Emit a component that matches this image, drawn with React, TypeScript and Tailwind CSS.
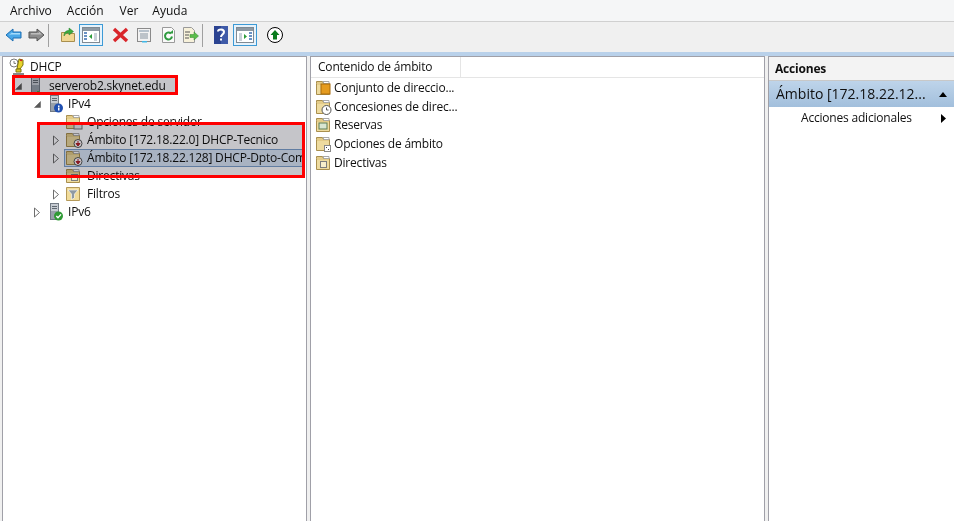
type IconProps = { className?: string };

const FONT = "font-['Open_Sans','Liberation_Sans',sans-serif]";

const MENU_ITEMS = [
  { label: 'Archivo', className: 'ml-[10px]' },
  { label: 'Acción', className: 'ml-[15px]' },
  { label: 'Ver', className: 'ml-[16px]' },
  { label: 'Ayuda', className: 'ml-[14px]' },
];

const Folder = ({ children }: { children?: React.ReactNode }) => (
  <svg width="18" height="16" viewBox="0 0 18 16" className="shrink-0">
    <path d="M1.5 3.5V1.5h6l1 2h6v11h-13z" fill="#e3cb88" stroke="#a98f4e" />
    <rect x="2" y="5" width="12" height="9" fill="#eedb9f" />
    <path d="M8 1.500h6v2H9z" fill="#fff" stroke="#a9a9a9" />
    {children}
  </svg>
);

const BadgeDown = () => (
  <g>
    <circle cx="13" cy="11.500" r="4" fill="#fff" stroke="#555" />
    <path d="M13 9v3M11 11.500l2 2.500 2-2.500z" stroke="#b3202a" fill="#b3202a" />
  </g>
);

const Server = ({ badge }: { badge?: 'blue' | 'green' | 'tiny' }) => (
  <svg width="18" height="18" viewBox="0 0 18 18" className="shrink-0">
    <rect x="4.500" y="0.500" width="8" height="16" fill="#c6cbd2" stroke="#727a84" />
    <rect x="6" y="3" width="5" height="1" fill="#5f6770" />
    <rect x="6" y="5" width="5" height="1" fill="#5f6770" />
    <rect x="5" y="8" width="7" height="8" fill="#98a0aa" />
    {badge === 'blue' && (
      <g>
        <circle cx="12.500" cy="13" r="4.500" fill="#1f4fb0" />
        <rect x="12" y="10.500" width="1.500" height="1.500" fill="#fff" />
        <rect x="12" y="12.500" width="1.500" height="3" fill="#fff" />
      </g>
    )}
    {badge === 'green' && (
      <g>
        <circle cx="12.500" cy="13" r="4.500" fill="#2f9a35" />
        <path d="M10.300 13l1.700 1.800 3-3.400" stroke="#fff" strokeWidth="1.400" fill="none" />
      </g>
    )}
    {badge === 'tiny' && <rect x="10" y="14" width="2" height="2" fill="#46b03c" />}
  </svg>
);

const OpenArrow = () => (
  <svg width="7" height="7" viewBox="0 0 7 7" className="shrink-0">
    <path d="M6.500.5v6h-6z" fill="#595959" stroke="#595959" strokeWidth="0.500" />
  </svg>
);

const ClosedArrow = () => (
  <svg width="8" height="11" viewBox="0 0 8 11" className="shrink-0">
    <path d="M1.500 1l5 4.500-5 4.500z" fill="#fff" stroke="#6e6e6e" />
  </svg>
);

const TreeRow = ({
  indent,
  arrow,
  icon,
  label,
  selected,
  className = '',
}: {
  indent: string;
  arrow?: React.ReactNode;
  icon: React.ReactNode;
  label: string;
  selected?: boolean;
  className?: string;
}) => (
  <div className={`flex h-[18px] items-center whitespace-nowrap ${className}`}>
    <div className={`flex h-full shrink-0 items-center justify-end ${indent}`}>{arrow}</div>
    {selected ? (
      <div className="ml-[4px] mr-[3px] flex h-full min-w-0 flex-1 items-center overflow-hidden border border-[#7da2ce] bg-[#dbe8f6]">
        <div className="flex w-[18px] shrink-0 justify-center">{icon}</div>
        <span className="ml-[4px]">{label}</span>
      </div>
    ) : (
      <>
        <div className="ml-[5px] flex w-[18px] shrink-0 justify-center">{icon}</div>
        <span className="ml-[4px]">{label}</span>
      </>
    )}
  </div>
);

const DhcpIcon = () => (
  <svg width="16" height="18" viewBox="0 0 16 18" className="shrink-0">
    <circle cx="5" cy="5" r="4" fill="#fff" stroke="#7a7a7a" />
    <path d="M5 3v2.400h2" stroke="#7a7a7a" fill="none" />
    <path d="M10 1l4 1v5l-3 4H8l1-5z" fill="#e8d42c" stroke="#7d7410" />
    <path d="M11 2l2 .5" stroke="#c22" strokeWidth="1.400" />
    <path d="M7 11h5v3H7z" fill="#d9c828" stroke="#7d7410" />
    <path d="M4 16h11" stroke="#555" strokeWidth="1.400" />
  </svg>
);

const FilterIcon = () => (
  <svg width="18" height="16" viewBox="0 0 18 16" className="shrink-0">
    <path d="M1.500 1.500h13v13h-13z" fill="#f1dc9b" stroke="#b59a5a" />
    <path d="M3 4h10L9.500 8v4l-3 1.500V8z" fill="#8f99a3" stroke="#fff" strokeWidth="0.600" />
  </svg>
);

const BackArrow = () => (
  <svg width="17" height="14" viewBox="0 0 17 14">
    <path d="M1 7l7-6v3h8v6H8v3z" fill="#4aa8e8" stroke="#1c6fb4" />
    <path d="M4 7l3-2.500V5h8v1.500H6z" fill="#a6dcfb" />
  </svg>
);

const ForwardArrow = () => (
  <svg width="17" height="14" viewBox="0 0 17 14">
    <path d="M16 7L9 1v3H1v6h8v3z" fill="#8c8c8c" stroke="#555" />
    <path d="M3 5h8V3.500L14 6.500H3z" fill="#bdbdbd" />
  </svg>
);

const FolderUp = () => (
  <svg width="16" height="16" viewBox="0 0 16 16">
    <path d="M1.500 5.500h4l1 1h8v8h-13z" fill="#f1d792" stroke="#a98f4e" />
    <path d="M4 9c0-4 2-5.500 5-5.500V1l4.500 3.500L9 8V5.800C6.500 5.800 5 7 4 9z" fill="#3cab3c" stroke="#1f7d28" strokeWidth="0.500" />
  </svg>
);

const PaneToggle = ({ flip }: { flip?: boolean }) => (
  <div className="flex h-[22px] w-[24px] items-center justify-center border border-[#3c9ad6] bg-[#e6f2fb]">
    <svg width="18" height="16" viewBox="0 0 18 16">
      <rect x="0.500" y="0.500" width="17" height="15" fill="#fff" stroke="#7f8a94" />
      <rect x="1" y="1" width="16" height="3" fill="#8e99a3" />
      {flip ? (
        <>
          <path d="M8 7l3 2.500L8 12z" fill="#2d9c3a" />
          <rect x="3" y="6" width="3" height="8" fill="#c9d1d8" />
          <path d="M13 6h3M13 9h3M13 12h3" stroke="#3a6fb0" strokeWidth="1.400" />
        </>
      ) : (
        <>
          <path d="M10 7L7 9.500l3 2.500z" fill="#2d9c3a" />
          <rect x="12" y="6" width="3" height="8" fill="#c9d1d8" />
          <path d="M2 6h3M2 9h3M2 12h3" stroke="#3a6fb0" strokeWidth="1.400" />
        </>
      )}
    </svg>
  </div>
);

const RedX = () => (
  <svg width="17" height="16" viewBox="0 0 17 16">
    <path d="M2 2l13 12M15 2L2 14" stroke="#d9252a" strokeWidth="3.400" fill="none" />
  </svg>
);

const PropsDoc = () => (
  <svg width="16" height="16" viewBox="0 0 16 16">
    <rect x="1.500" y="1.500" width="13" height="13" fill="#f2f2f2" stroke="#8a8a8a" />
    <rect x="3" y="3" width="10" height="2" fill="#b7c2cc" />
    <path d="M4 7h8M4 9h8M4 11h8" stroke="#8794a0" />
    <rect x="6" y="14" width="5" height="1.500" fill="#40b7e6" />
  </svg>
);

const Refresh = () => (
  <svg width="15" height="16" viewBox="0 0 15 16">
    <path d="M1.500.5h9l3 3v12h-12z" fill="#fafafa" stroke="#9a9a9a" />
    <path d="M11 9.500a3.500 3.500 0 1 1-1-3" stroke="#2f9b3f" strokeWidth="2" fill="none" />
    <path d="M8 6.500h4V3z" fill="#2f9b3f" />
  </svg>
);

const ExportList = () => (
  <svg width="17" height="16" viewBox="0 0 17 16">
    <path d="M1.500.5h8l3 3v12h-11z" fill="#f7f1da" stroke="#9a9a9a" />
    <path d="M3 5h5M3 8h4M3 11h4" stroke="#555" />
    <path d="M8 7.500h4V5l4.500 4-4.500 4v-2.500H8z" fill="#5bbd4a" stroke="#348a2b" strokeWidth="0.500" />
  </svg>
);

const Help = () => (
  <svg width="14" height="18" viewBox="0 0 14 18">
    <rect width="14" height="18" fill="#3e5aa8" />
    <rect width="7" height="18" fill="#2b4391" />
    <path d="M4 5.500C4 3 10 2.500 10 6c0 2.500-3 2.500-3 5" stroke="#fff" strokeWidth="2" fill="none" />
    <rect x="6" y="12.500" width="2" height="2" fill="#fff" />
  </svg>
);

const UpCircle = () => (
  <svg width="16" height="16" viewBox="0 0 16 16">
    <circle cx="8" cy="8" r="7.500" fill="#fff" stroke="#000" />
    <path d="M8 3L3.500 8H6v4.500h4V8h2.500z" fill="#0a7d1e" />
  </svg>
);

const Separator = ({ className }: IconProps) => (
  <div className={`h-[23px] w-px bg-[#a0a0a0] ${className}`} />
);

const RedBox = ({ className }: IconProps) => (
  <div className={`pointer-events-none absolute border-[3px] border-[#fe0000] ${className}`}>
    <div className="h-full w-full bg-[#c5c5c9] mix-blend-multiply" />
  </div>
);

const CONTENT_ITEMS: { label: string; badge: React.ReactNode }[] = [
  {
    label: 'Conjunto de direccio...',
    badge: <rect x="6" y="4" width="9" height="10" fill="#e59b1f" stroke="#a86a0c" />,
  },
  {
    label: 'Concesiones de direc...',
    badge: (
      <g>
        <circle cx="11.500" cy="11" r="4.500" fill="#fff" stroke="#555" />
        <path d="M11.500 8.500V11h2" stroke="#555" fill="none" />
      </g>
    ),
  },
  {
    label: 'Reservas',
    badge: <rect x="4" y="6" width="8" height="6" fill="#d8e6d2" stroke="#5b7d55" />,
  },
  {
    label: 'Opciones de ámbito',
    badge: (
      <g>
        <rect x="9.500" y="9.500" width="6" height="6" fill="#fff" stroke="#888" />
        <rect x="11" y="11" width="1" height="1" fill="#444" />
        <rect x="13" y="13" width="1" height="1" fill="#444" />
      </g>
    ),
  },
  {
    label: 'Directivas',
    badge: <rect x="5.500" y="6.500" width="6" height="6" fill="#f7eecb" stroke="#7d7d7d" />,
  },
];

export default function App() {
  return (
    <div className={`relative flex h-[521px] w-[954px] flex-col overflow-hidden bg-[#f0f0f0] text-[12px] leading-[16px] tracking-[-0.2px] text-[#101010] ${FONT}`}>
      <div className="flex h-[22px] shrink-0 items-center border-b border-[#d0d0d0] bg-[#f5f6f7] tracking-normal">
        {MENU_ITEMS.map((item) => (
          <span key={item.label} className={item.className}>
            {item.label}
          </span>
        ))}
      </div>

      <div className="flex h-[30px] shrink-0 items-center bg-[#f0f0f0] pb-[4px]">
        <div className="ml-[5px]"><BackArrow /></div>
        <div className="ml-[6px]"><ForwardArrow /></div>
        <Separator className="ml-[3px]" />
        <div className="ml-[11px]"><FolderUp /></div>
        <div className="ml-[3px]"><PaneToggle /></div>
        <div className="ml-[9px]"><RedX /></div>
        <div className="ml-[7px]"><PropsDoc /></div>
        <div className="ml-[9px]"><Refresh /></div>
        <div className="ml-[6px]"><ExportList /></div>
        <Separator className="ml-[3px]" />
        <div className="ml-[11px]"><Help /></div>
        <div className="ml-[5px]"><PaneToggle flip /></div>
        <div className="ml-[10px]"><UpCircle /></div>
      </div>

      <div className="flex min-h-0 flex-1 bg-[#b9d1ea] pt-[4px]">
        <div className="flex min-h-0 flex-1 bg-[#f0f0f0]">
          <div className="ml-[2px] w-[305px] shrink-0 border-x border-t border-[#a0a0a8] bg-white pt-px">
            <TreeRow indent="w-0" icon={<DhcpIcon />} label="DHCP" className="h-[19px] pb-[2px]" />
            <TreeRow indent="w-[19px]" arrow={<OpenArrow />} icon={<Server badge="tiny" />} label="serverob2.skynet.edu" />
            <TreeRow indent="w-[38px]" arrow={<OpenArrow />} icon={<Server badge="blue" />} label="IPv4" />
            <TreeRow indent="w-[57px]" icon={<Folder><rect x="9" y="9" width="8" height="6" fill="#e9e9e9" stroke="#777" /></Folder>} label="Opciones de servidor" />
            <TreeRow indent="w-[57px]" arrow={<ClosedArrow />} icon={<Folder><BadgeDown /></Folder>} label="Ámbito [172.18.22.0] DHCP-Tecnico" />
            <TreeRow indent="w-[57px]" arrow={<ClosedArrow />} icon={<Folder><BadgeDown /></Folder>} label="Ámbito [172.18.22.128] DHCP-Dpto-Com" selected />
            <TreeRow indent="w-[57px]" icon={<Folder><rect x="6.500" y="6.500" width="6" height="6" fill="#f7eecb" stroke="#7d7d7d" /></Folder>} label="Directivas" />
            <TreeRow indent="w-[57px]" arrow={<ClosedArrow />} icon={<FilterIcon />} label="Filtros" />
            <TreeRow indent="w-[38px]" arrow={<ClosedArrow />} icon={<Server badge="green" />} label="IPv6" />
          </div>

          <div className="ml-[3px] w-[455px] shrink-0 border-x border-t border-[#a0a0a8] bg-white">
            <div className="flex h-[21px] items-center">
              <div className="flex h-full w-[150px] items-center border-b border-r border-[#e5e5e5] pl-[7px]">Contenido de ámbito</div>
              <div className="h-full flex-1 border-b border-[#e5e5e5]" />
            </div>
            <div className="pt-[0.5px]">
              {CONTENT_ITEMS.map((item) => (
                <div key={item.label} className="flex h-[18.8px] items-center whitespace-nowrap pl-[4px]">
                  <Folder>{item.badge}</Folder>
                  <span className="ml-px">{item.label}</span>
                </div>
              ))}
            </div>
          </div>

          <div className="ml-[3px] flex-1 border-l border-t border-[#a0a0a8] bg-white">
            <div className="flex h-[24px] items-center border-b border-[#c8c8c8] bg-[#f3f3f3] pl-[6px] font-bold">Acciones</div>
            <div className="flex h-[26px] items-center justify-between bg-gradient-to-b from-[#bed4ea] to-[#a2bfdc] pl-[7px] pr-[7px] text-[14px] tracking-normal">
              <span>Ámbito [172.18.22.12...</span>
              <svg width="8" height="5" viewBox="0 0 8 5"><path d="M4 0l4 5H0z" fill="#000" /></svg>
            </div>
            <div className="flex h-[22px] items-center justify-between pl-[32px] pr-[8px]">
              <span>Acciones adicionales</span>
              <svg width="5" height="9" viewBox="0 0 5 9"><path d="M0 0l5 4.500L0 9z" fill="#000" /></svg>
            </div>
          </div>
        </div>
      </div>

      <RedBox className="left-[12px] top-[75px] h-[20px] w-[166px]" />
      <RedBox className="left-[37px] top-[122px] h-[56px] w-[268px]" />
    </div>
  );
}
